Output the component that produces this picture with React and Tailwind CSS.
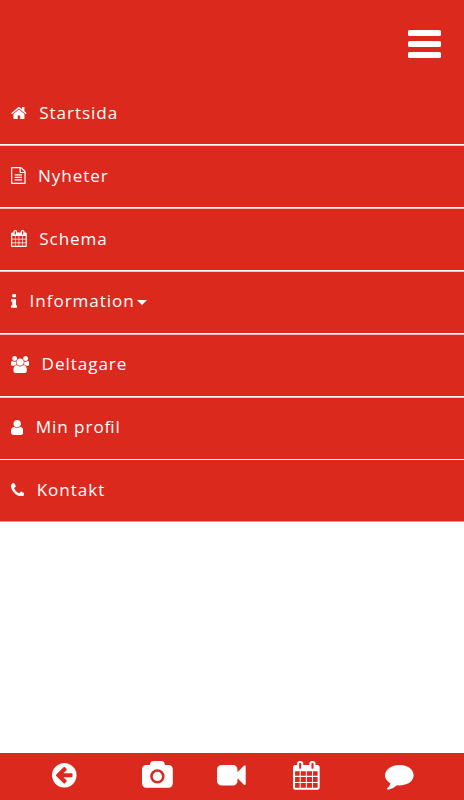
// Glyphs are on a 1792 unit em, each viewBox is cropped to the drawn shape
const icons = {
  home: {
    box: "64 256 1664 1280",
    path: "M1472 992v480q0 26-19 45t-45 19h-384v-384h-256v384h-384q-26 0-45-19t-19-45v-480q0-1 .5-3t.5-3l575-474 575 474q1 2 1 6zm223-69l-62 74q-8 9-21 11h-3q-13 0-21-7l-692-577-692 577q-12 8-24 7-13-2-21-11l-62-74q-8-10-7-23.5t11-21.5l719-599q32-26 76-26t76 26l244 204v-195q0-14 9-23t23-9h192q14 0 23 9t9 23v408l219 182q10 8 11 21.5t-7 23.5z",
  },
  file: {
    box: "128 0 1536 1792",
    path: "M1596 380q28 28 48 76t20 88v1152q0 40-28 68t-68 28h-1344q-40 0-68-28t-28-68v-1600q0-40 28-68t68-28h896q40 0 88 20t76 48zm-444-244v376h376q-10-29-22-41l-313-313q-12-12-41-22zm384 1528v-1024h-416q-40 0-68-28t-28-68v-416h-768v1536h1280zm-1024-864q0-14 9-23t23-9h704q14 0 23 9t9 23v64q0 14-9 23t-23 9h-704q-14 0-23-9t-9-23v-64zm736 224q14 0 23 9t9 23v64q0 14-9 23t-23 9h-704q-14 0-23-9t-9-23v-64q0-14 9-23t23-9h704zm0 256q14 0 23 9t9 23v64q0 14-9 23t-23 9h-704q-14 0-23-9t-9-23v-64q0-14 9-23t23-9h704z",
  },
  calendar: {
    box: "64 0 1664 1792",
    path: "M192 1664h288v-288h-288v288zm352 0h320v-288h-320v288zm-352-352h288v-320h-288v320zm352 0h320v-320h-320v320zm-352-384h288v-288h-288v288zm736 736h320v-288h-320v288zm-384-736h320v-288h-320v288zm768 736h288v-288h-288v288zm-384-352h320v-320h-320v320zm-352-864v-288q0-13-9.5-22.5t-22.5-9.5h-64q-13 0-22.5 9.5t-9.5 22.5v288q0 13 9.5 22.5t22.5 9.5h64q13 0 22.5-9.5t9.5-22.5zm736 864h288v-320h-288v320zm-384-384h320v-288h-320v288zm384 0h288v-288h-288v288zm32-480v-288q0-13-9.5-22.5t-22.5-9.5h-64q-13 0-22.5 9.5t-9.5 22.5v288q0 13 9.5 22.5t22.5 9.5h64q13 0 22.5-9.5t9.5-22.5zm384-64v1280q0 52-38 90t-90 38h-1408q-52 0-90-38t-38-90v-1280q0-52 38-90t90-38h128v-96q0-66 47-113t113-47h64q66 0 113 47t47 113v96h384v-96q0-66 47-113t113-47h64q66 0 113 47t47 113v96h128q52 0 90 38t38 90z",
  },
  info: {
    box: "576 128 640 1408",
    path: "M1216 1344v128q0 26-19 45t-45 19h-512q-26 0-45-19t-19-45v-128q0-26 19-45t45-19h64v-384h-64q-26 0-45-19t-19-45v-128q0-26 19-45t45-19h384q26 0 45 19t19 45v576h64q26 0 45 19t19 45zm-128-1152v192q0 26-19 45t-45 19h-256q-26 0-45-19t-19-45v-192q0-26 19-45t45-19h256q26 0 45 19t19 45z",
  },
  users: {
    box: "-64 0 1920 1792",
    path: "M529 896q-162 5-265 128h-134q-82 0-138-40.5t-56-118.5q0-353 124-353 6 0 43.5 21t97.5 42.5 119 21.5q67 0 133-23-5 37-5 66 0 139 81 256zm1071 637q0 120-73 189.5t-194 69.5h-874q-121 0-194-69.5t-73-189.5q0-53 3.5-103.5t14-109 26.5-108.5 43-97.5 62-81 85.5-53.5 111.5-20q10 0 43 21.5t73 48 107 48 135 21.5 135-21.5 107-48 73-48 43-21.5q61 0 111.5 20t85.5 53.5 62 81 43 97.5 26.5 108.5 14 109 3.5 103.5zm-1024-1277q0 106-75 181t-181 75-181-75-75-181 75-181 181-75 181 75 75 181zm704 384q0 159-112.5 271.5t-271.5 112.5-271.5-112.5-112.5-271.5 112.5-271.5 271.5-112.5 271.5 112.5 112.5 271.5zm576 225q0 78-56 118.5t-138 40.5h-134q-103-123-265-128 81-117 81-256 0-29-5-66 66 23 133 23 59 0 119-21.5t97.5-42.5 43.5-21q124 0 124 353zm-128-609q0 106-75 181t-181 75-181-75-75-181 75-181 181-75 181 75 75 181z",
  },
  user: {
    box: "256 128 1280 1536",
    path: "M1536 1399q0 109-62.5 187t-150.5 78h-854q-88 0-150.5-78t-62.5-187q0-85 8.5-160.5t31.5-152 58.5-131 94-89 134.5-34.5q131 128 313 128t313-128q76 0 134.5 34.5t94 89 58.5 131 31.5 152 8.5 160.5zm-256-887q0 159-112.5 271.5t-271.5 112.5-271.5-112.5-112.5-271.5 112.5-271.5 271.5-112.5 271.5 112.5 112.5 271.5z",
  },
  phone: {
    box: "192 128 1408 1408",
    path: "M1600 1240q0 27-10 70.5t-21 68.5q-21 50-122 106-94 51-186 51-27 0-53-3.5t-57.5-12.5-47-14.5-55.5-20.5-49-18q-98-35-175-83-127-79-264-216t-216-264q-48-77-83-175-3-9-18-49t-20.5-55.5-14.5-47-12.5-57.5-3.5-53q0-92 51-186 56-101 106-122 25-11 68.5-21t70.5-10q14 0 21 3 18 6 53 76 11 19 30 54t35 63.5 31 53.5q3 4 17.5 25t21.5 35.5 7 28.5q0 20-28.5 50t-62 55-62 53-28.5 46q0 9 5 22.5t8.5 20.5 14 24 11.5 19q76 137 174 235t235 174q2 1 19 11.5t24 14 20.5 8.5 22.5 5q18 0 46-28.5t53-62 55-62 50-28.5q14 0 28.5 7t35.5 21.5 25 17.5q25 15 53.5 31t63.5 35 54 30q70 35 76 53 3 7 3 21z",
  },
  back: {
    box: "128 128 1536 1536",
    path: "M1408 960v-128q0-26-19-45t-45-19h-502l189-189q19-19 19-45t-19-45l-91-91q-18-18-45-18t-45 18l-362 362-91 91q-18 18-18 45t18 45l91 91 362 362q18 18 45 18t45-18l91-91q18-18 18-45t-18-45l-189-189h502q26 0 45-19t19-45zm256-64q0 209-103 385.5t-279.5 279.5-385.5 103-385.5-103-279.5-279.5-103-385.5 103-385.5 279.5-279.5 385.5-103 385.5 103 279.5 279.5 103 385.5z",
  },
  camera: {
    box: "-64 0 1920 1664",
    path: "M896 672q119 0 203.5 84.5t84.5 203.5-84.5 203.5-203.5 84.5-203.5-84.5-84.5-203.5 84.5-203.5 203.5-84.5zm704-416q106 0 181 75t75 181v896q0 106-75 181t-181 75h-1408q-106 0-181-75t-75-181v-896q0-106 75-181t181-75h224l51-136q19-49 69.5-84.5t103.5-35.5h512q53 0 103.5 35.5t69.5 84.5l51 136h224zm-704 1152q185 0 316.5-131.5t131.5-316.5-131.5-316.5-316.5-131.5-316.5 131.5-131.5 316.5 131.5 316.5 316.5 131.5z",
  },
  video: {
    box: "0 256 1792 1280",
    path: "M1792 352v1088q0 42-39 59-13 5-25 5-27 0-45-19l-403-403v166q0 119-84.5 203.5t-203.5 84.5h-704q-119 0-203.5-84.5t-84.5-203.5v-704q0-119 84.5-203.5t203.5-84.5h704q119 0 203.5 84.5t84.5 203.5v165l403-402q18-19 45-19 12 0 25 5 39 17 39 59z",
  },
  comment: {
    box: "0 256 1792 1536",
    path: "M1792 896q0 174-120 321.5t-326 233-450 85.5q-70 0-145-8-198 175-460 242-49 14-114 22-17 2-30.5-9t-17.5-29v-1q-3-4-.5-12t2-10 4.5-9.5l6-9 7-8.5 8-9q7-8 31-34.5t34.5-38 31-39.5 32.5-51 27-59 26-76q-157-89-247.5-220t-90.5-281q0-130 71-248.5t191-204.5 286-136.5 348-50.5q244 0 450 85.5t326 233 120 321.5z",
  },
};

const menu = [
  { name: "Startsida", icon: "home", size: "w-[15.9px] h-[12.2px]" },
  { name: "Nyheter", icon: "file", size: "w-[14.7px] h-[17.1px]" },
  { name: "Schema", icon: "calendar", size: "w-[15.9px] h-[17.1px]" },
  { name: "Information", icon: "info", size: "w-[6.3px] h-[13.8px]", dropdown: true },
  { name: "Deltagare", icon: "users", size: "mt-[2px] w-[18.3px] h-[17.1px]" },
  { name: "Min profil", icon: "user", size: "mt-px w-[12.4px] h-[14.9px]" },
  { name: "Kontakt", icon: "phone", size: "w-[13.4px] h-[13.4px]" },
];

const Icon = ({ name, className }) => (
  <svg viewBox={icons[name].box} fill="currentColor" className={`shrink-0 ${className}`}>
    <path d={icons[name].path} />
  </svg>
);

const App = () => {
  return (
    <div className="flex h-screen flex-col bg-white font-['Open_Sans',sans-serif] text-white">
      {/* Header */}
      <header className="flex h-[82px] shrink-0 justify-end bg-[#db291e] pt-[30px] pr-[23px]">
        <button className="flex h-[27.5px] w-[33px] flex-col justify-between">
          <span className="h-[5.5px] w-full rounded-[1.5px] bg-white" />
          <span className="h-[5.5px] w-full rounded-[1.5px] bg-white" />
          <span className="h-[5.5px] w-full rounded-[1.5px] bg-white" />
        </button>
      </header>

      {/* Menu */}
      <nav className="shrink-0 border-b border-[#f08f88] bg-[#db291e]">
        {menu.map((item) => (
          <div key={item.name} className="group">
            <a className="flex h-[61px] items-center gap-[12.3px] pb-[3px] pl-[11px] group-first:h-[62px] group-first:pb-0 group-last:pb-[2px] group-nth-2:pb-px group-nth-3:pb-px">
              <Icon name={item.icon} className={item.size} />
              <span className="flex items-center text-[17.1px] leading-6 tracking-[0.94px] [font-feature-settings:'liga'_1]">
                {item.name}
                {item.dropdown && (
                  <span className="mt-[2px] ml-[2.5px] border-x-[5px] border-t-[5px] border-x-transparent border-t-white" />
                )}
              </span>
            </a>
            <div className="h-[2px] border-t border-white bg-[#f4beba] group-last:hidden group-nth-6:h-px" />
          </div>
        ))}
      </nav>

      {/* Bottom toolbar */}
      <footer className="mt-auto flex h-[47px] shrink-0 bg-[#db291e] pl-[52.4px]">
        <Icon name="back" className="mt-[10px] h-[24.6px] w-[24.6px]" />
        <Icon name="camera" className="mt-[8px] ml-[65px] h-[26.7px] w-[30.8px]" />
        <Icon name="video" className="mt-[12px] ml-[44.4px] h-[20.5px] w-[28.7px]" />
        <Icon name="calendar" className="mt-[8px] ml-[47.2px] h-[28.7px] w-[26.7px]" />
        <Icon name="comment" className="mt-[12px] ml-[65.2px] h-[24.6px] w-[28.7px]" />
      </footer>
    </div>
  );
};

export default App;
